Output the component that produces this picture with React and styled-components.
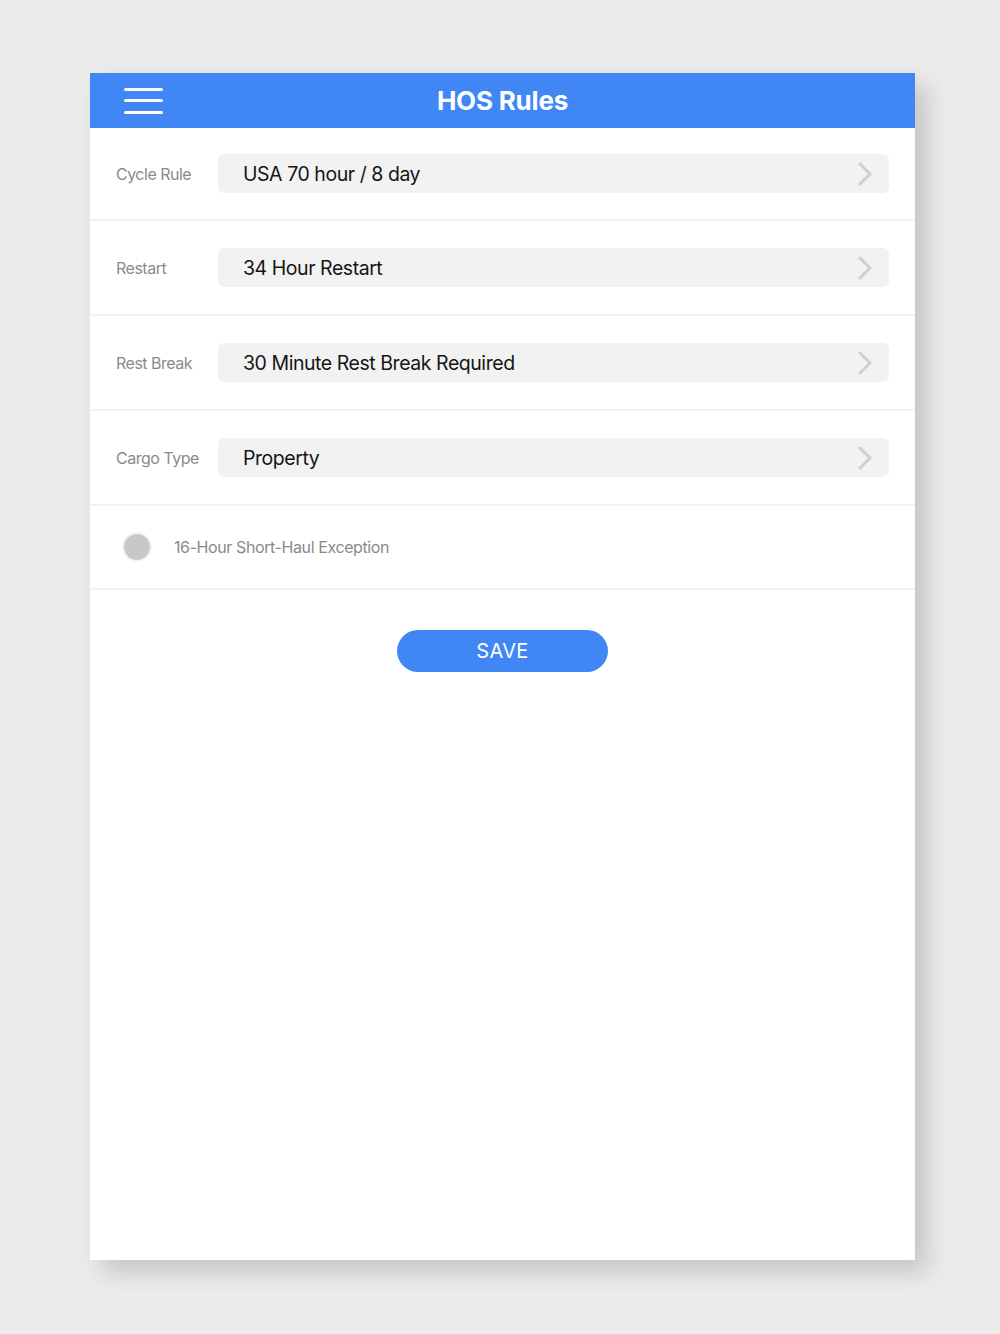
import React, { useState } from 'react';
import styled, { createGlobalStyle } from 'styled-components';

const GlobalStyle = createGlobalStyle`
  body {
    margin: 0;
    background: #ebebeb;
    font-family: Inter, 'Liberation Sans', sans-serif;
  }
`;

const Page = styled.div`
  padding: 73px 0 74px 90px;
`;

const Card = styled.div`
  width: 825px;
  height: 1187px;
  background: #fff;
  box-shadow: 12px 12px 22px rgba(0, 0, 0, 0.16);
  display: flex;
  flex-direction: column;
`;

const Header = styled.header`
  height: 55px;
  background: #4087f5;
  display: grid;
  grid-template-columns: 100px 1fr 100px;
  align-items: center;
`;

const Burger = styled.button`
  background: none;
  border: 0;
  padding: 0;
  margin-left: 34px;
  width: 39px;
  height: 26px;
  display: flex;
  flex-direction: column;
  justify-content: space-between;
  cursor: pointer;

  span {
    display: block;
    height: 3px;
    border-radius: 2px;
    background: #fff;
  }
`;

const Title = styled.h1`
  margin: 0;
  text-align: center;
  color: #fff;
  font-size: 26px;
  font-weight: 700;
  letter-spacing: -0.2px;
`;

const Row = styled.div`
  height: 93px;
  border-bottom: 2px solid #f2f2f2;
  display: flex;
  align-items: center;
  padding: 0 26px;

  &:first-of-type {
    height: 91px;
  }
`;

const Label = styled.span`
  width: 102px;
  font-size: 16px;
  color: #8a8a8a;
  letter-spacing: -0.5px;
`;

const Select = styled.button`
  flex: 1;
  height: 39px;
  background: #f2f2f2;
  border: 0;
  border-radius: 6px;
  display: flex;
  align-items: center;
  justify-content: space-between;
  padding: 0 16px 0 25px;
  font-family: inherit;
  font-size: 19.5px;
  color: #151515;
  letter-spacing: -0.45px;
  cursor: pointer;
`;

const ToggleRow = styled.div`
  height: 82px;
  border-bottom: 2px solid #f2f2f2;
  display: flex;
  align-items: center;
  gap: 24px;
  padding-left: 34px;
`;

const Dot = styled.span`
  width: 26px;
  height: 26px;
  border-radius: 50%;
  background: ${({ $on }) => ($on ? '#4087f5' : '#c8c8c8')};
  box-shadow: 0 0 0 2px #f4f4f4;
  cursor: pointer;
`;

const ToggleText = styled.span`
  font-size: 16px;
  color: #8a8a8a;
  letter-spacing: -0.4px;
`;

const Actions = styled.div`
  display: flex;
  justify-content: center;
  padding-top: 40px;
`;

const SaveButton = styled.button`
  width: 211px;
  height: 42px;
  border: 0;
  border-radius: 21px;
  background: #4087f5;
  color: #fff;
  font-family: inherit;
  font-size: 20px;
  letter-spacing: 0.3px;
  cursor: pointer;
`;

const Chevron = () => (
  <svg width="16" height="24" viewBox="0 0 16 24" fill="none">
    <path d="M3 2l10 10-10 10" stroke="#cfcfcf" strokeWidth="3" strokeLinecap="round" strokeLinejoin="round" />
  </svg>
);

const rules = [
  { label: 'Cycle Rule', value: 'USA 70 hour / 8 day' },
  { label: 'Restart', value: '34 Hour Restart' },
  { label: 'Rest Break', value: '30 Minute Rest Break Required' },
  { label: 'Cargo Type', value: 'Property' },
];

export default function App() {
  const [shortHaul, setShortHaul] = useState(false);

  return (
    <Page>
      <GlobalStyle />
      <Card>
        <Header>
          <Burger aria-label="Menu">
            <span />
            <span />
            <span />
          </Burger>
          <Title>HOS Rules</Title>
          <div />
        </Header>
        {rules.map((r) => (
          <Row key={r.label}>
            <Label>{r.label}</Label>
            <Select>
              {r.value}
              <Chevron />
            </Select>
          </Row>
        ))}
        <ToggleRow>
          <Dot $on={shortHaul} onClick={() => setShortHaul(!shortHaul)} />
          <ToggleText>16-Hour Short-Haul Exception</ToggleText>
        </ToggleRow>
        <Actions>
          <SaveButton>SAVE</SaveButton>
        </Actions>
      </Card>
    </Page>
  );
}
